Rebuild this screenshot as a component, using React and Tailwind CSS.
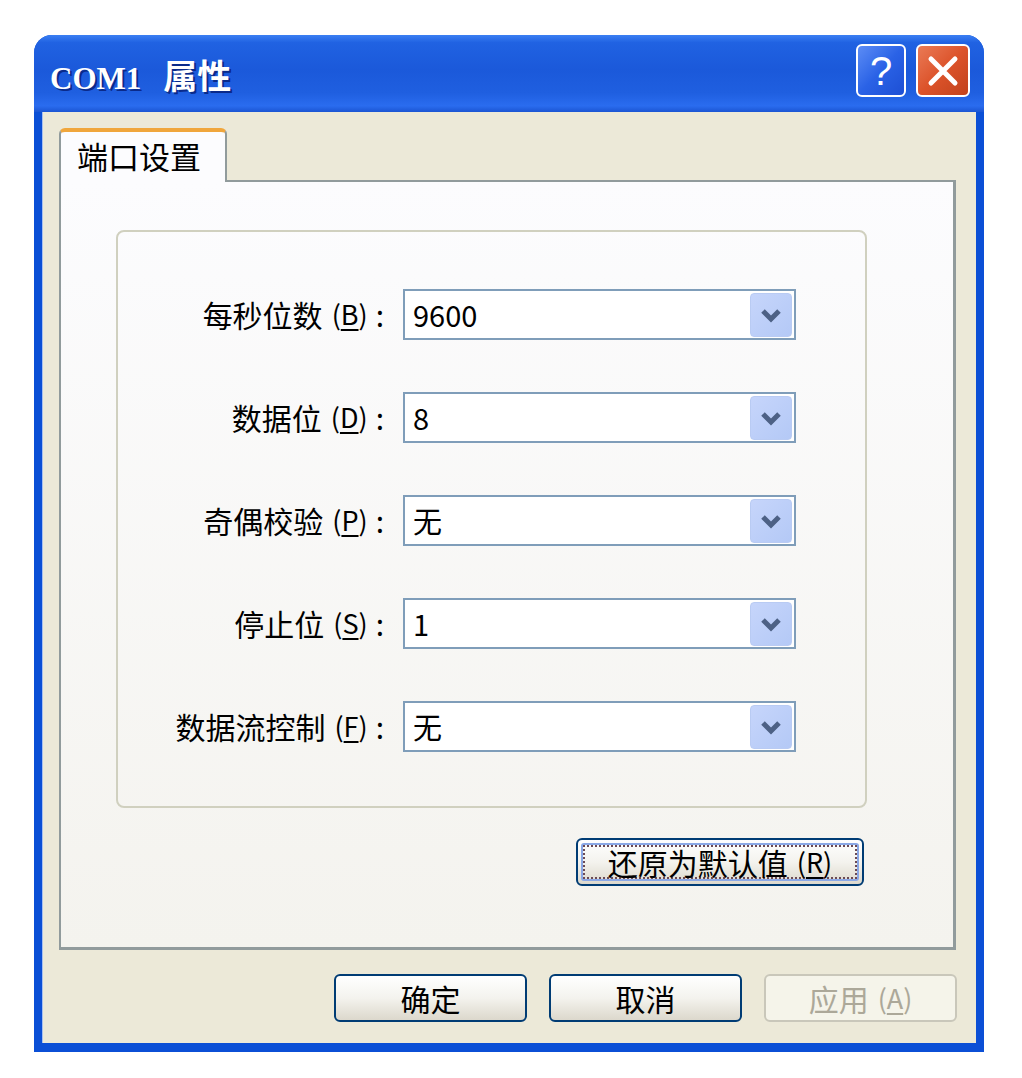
import React from 'react';

const FONT = { fontFamily: '"Noto Sans CJK SC", "Noto Sans", sans-serif' };

const rows = [
  { label: '每秒位数', key: 'B', value: '9600' },
  { label: '数据位', key: 'D', value: '8' },
  { label: '奇偶校验', key: 'P', value: '无' },
  { label: '停止位', key: 'S', value: '1' },
  { label: '数据流控制', key: 'F', value: '无' },
];

function Chevron() {
  return (
    <svg width="22" height="16" viewBox="0 0 22 16">
      <polyline points="3,4 11,12 19,4" fill="none" stroke="#4d6185" strokeWidth="5" strokeLinejoin="miter" />
    </svg>
  );
}

function Combo({ value }) {
  return (
    <div className="h-[51px] w-[393px] border-2 border-[#7f9db9] bg-white flex items-center pl-[8px] pr-[2px]">
      <span className="flex-1 text-[29px] leading-none text-black">{value}</span>
      <div className="h-[44px] w-[42px] rounded-[4px] bg-gradient-to-br from-[#c6d5fb] to-[#b4c9f6] border border-[#b9cbf3] flex items-center justify-center">
        <Chevron />
      </div>
    </div>
  );
}

function Accel({ k }) {
  return (
    <span className="text-[27px] ml-[9px]">
      (<span className="underline underline-offset-[4px]">{k}</span>)
    </span>
  );
}

function XPButton({ children, disabled, focused, className = '' }) {
  if (disabled) {
    return (
      <div className={`h-[48px] rounded-[6px] border-2 border-[#c9c7ba] bg-[#f5f4ea] flex items-center justify-center text-[30px] text-[#aca899] ${className}`}>
        {children}
      </div>
    );
  }
  return (
    <div className={`h-[48px] rounded-[6px] border-2 border-[#003c74] bg-gradient-to-b from-[#ffffff] via-[#f4f3ee] to-[#dcd8cc] flex items-center justify-center text-[30px] text-black ${focused ? 'p-[3px]' : ''} ${className}`}>
      {focused ? (
        <div className="w-full h-full rounded-[3px] border-2 border-[#8aa8e6] flex items-center justify-center">
          <div className="w-full h-full border-2 border-dotted border-[#6b4a55] flex items-center justify-center">
            {children}
          </div>
        </div>
      ) : children}
    </div>
  );
}

export default function App() {
  return (
    <div className="min-h-[1078px] bg-white pt-[35px] pl-[34px]" style={FONT}>
      <div className="w-[950px] h-[1017px] flex flex-col rounded-t-[18px] bg-[#0b4fd6] overflow-hidden">
        {/* title bar */}
        <div className="h-[77px] flex items-center pl-[16px] pr-[14px] bg-[linear-gradient(to_bottom,#3b7ff3_0%,#2062e2_10%,#1b59da_45%,#1f5fe0_75%,#2a6cef_92%,#1b55d3_100%)]">
          <div className="flex items-baseline text-white font-bold [text-shadow:2px_2px_0_#0a2a8a] pt-[4px]">
            <span className="text-[31px]" style={{ fontFamily: '"Liberation Serif", serif' }}>COM1</span>
            <span className="text-[34px] ml-[22px]">属性</span>
          </div>
          <div className="flex-1" />
          <div className="flex gap-[10px] mt-[-6px]">
            <div className="w-[50px] h-[53px] rounded-[6px] border-2 border-white bg-gradient-to-br from-[#5c8cf5] via-[#2a62e6] to-[#1d4fd4] flex items-center justify-center text-white text-[40px] leading-none" style={{ fontFamily: '"Liberation Sans", sans-serif' }}>
              ?
            </div>
            <div className="w-[54px] h-[53px] rounded-[6px] border-2 border-white bg-gradient-to-br from-[#ea7a55] via-[#dc532a] to-[#c2421c] flex items-center justify-center">
              <svg width="34" height="34" viewBox="0 0 34 34">
                <path d="M5 5 L29 29 M29 5 L5 29" stroke="white" strokeWidth="5" strokeLinecap="round" />
              </svg>
            </div>
          </div>
        </div>

        {/* client */}
        <div className="flex-1 mx-[8px] mb-[9px] bg-[#ece9d8] flex flex-col px-[16px] pt-[16px] border-l border-[#a8c0f0]">
          {/* tab */}
          <div className="flex">
            <div className="relative z-10 w-[168px] h-[54px] -mb-[2px] rounded-t-[6px] border-x-2 border-[#919b9c] bg-[#fcfcfe] border-t-[4px] border-t-[#f0a63c] flex items-start pl-[16px] pt-[4px] text-[31px] text-black leading-[40px]">
              端口设置
            </div>
          </div>
          {/* panel */}
          <div className="h-[770px] w-[897px] border-2 border-[#919b9c] border-r-[3px] border-b-[3px] bg-gradient-to-b from-[#fcfcfe] to-[#f4f3ee] flex flex-col pt-[48px]">
            <div className="ml-[55px] w-[751px] h-[578px] rounded-[8px] border-2 border-[#d0d0bf] pt-[57px]">
              <div className="grid grid-cols-[266px_393px] gap-x-[19px] gap-y-[52px]">
                {rows.map(r => (
                  <React.Fragment key={r.key}>
                    <div className="flex items-center justify-end text-[30px] text-black h-[51px] whitespace-nowrap">
                      <span>{r.label}</span><Accel k={r.key} /><span className="ml-[8px]">:</span>
                    </div>
                    <Combo value={r.value} />
                  </React.Fragment>
                ))}
              </div>
            </div>
            <div className="flex justify-end mt-[30px] mr-[89px]">
              <XPButton focused className="w-[288px]">
                <span>还原为默认值</span><Accel k="R" />
              </XPButton>
            </div>
          </div>
          {/* buttons */}
          <div className="flex justify-end gap-[22px] mt-[24px] mr-[3px]">
            <XPButton className="w-[193px]">确定</XPButton>
            <XPButton className="w-[193px]">取消</XPButton>
            <XPButton disabled className="w-[193px]"><span>应用</span><Accel k="A" /></XPButton>
          </div>
        </div>
      </div>
    </div>
  );
}
